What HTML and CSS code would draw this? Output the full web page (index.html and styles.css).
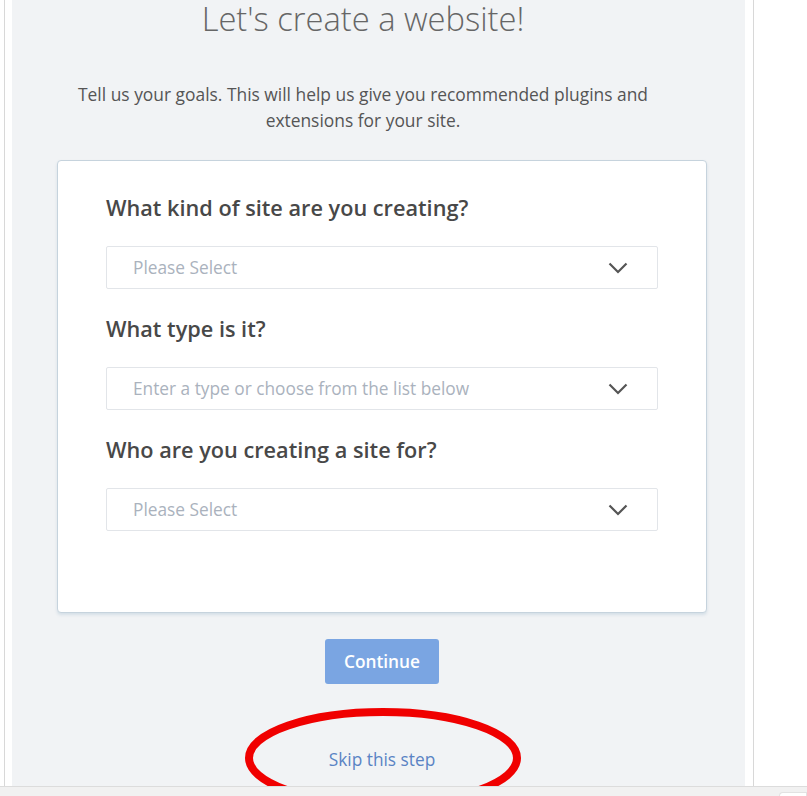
FILE: index.html
```html
<!DOCTYPE html>
<html lang="en">
<head>
    <meta charset="UTF-8">
    <meta name="viewport" content="width=device-width, initial-scale=1">
    <title>Let's create a website!</title>
    <link rel="stylesheet" href="styles.css">
</head>
<body>
    <div class="frame">
        <div class="column">
            <div class="intro">
                <h1>Let's create a website!</h1>
                <p>Tell us your goals. This will help us give you recommended plugins and extensions for your site.</p>
            </div>

            <div class="content">
                <div class="card">
                    <div class="field">
                        <h2>What kind of site are you creating?</h2>
                        <div class="select">
                            <span>Please Select</span>
                            <svg class="chevron" width="20" height="12" viewBox="0 0 20 12"><path d="M1.5 1.5 L10 10 L18.5 1.5" fill="none" stroke="#555" stroke-width="2.2"/></svg>
                        </div>
                    </div>

                    <div class="field">
                        <h2>What type is it?</h2>
                        <div class="select">
                            <span>Enter a type or choose from the list below</span>
                            <svg class="chevron" width="20" height="12" viewBox="0 0 20 12"><path d="M1.5 1.5 L10 10 L18.5 1.5" fill="none" stroke="#555" stroke-width="2.2"/></svg>
                        </div>
                    </div>

                    <div class="field">
                        <h2>Who are you creating a site for?</h2>
                        <div class="select">
                            <span>Please Select</span>
                            <svg class="chevron" width="20" height="12" viewBox="0 0 20 12"><path d="M1.5 1.5 L10 10 L18.5 1.5" fill="none" stroke="#555" stroke-width="2.2"/></svg>
                        </div>
                    </div>
                </div>

                <div class="actions">
                    <button type="button" class="btn-continue">Continue</button>
                </div>

                <div class="skip">
                    <a href="#">Skip this step</a>
                    <!-- Markierung aus dem Screenshot -->
                    <svg class="circle" width="284" height="110" viewBox="0 0 284 110"><ellipse cx="142" cy="55" rx="134" ry="46" fill="none" stroke="#f00000" stroke-width="8"/></svg>
                </div>
            </div>
        </div>
    </div>
    <div class="bottom-bar">
        <div class="tab"></div>
    </div>
</body>
</html>
```

FILE: styles.css
```css
body {
    font-family: 'Open Sans', sans-serif;
    background-color: #fff;
    margin: 0;
    padding: 0;
    overflow: hidden;
}

.frame {
    margin-left: 4px;
    width: 733px;
    height: 786px;
    padding: 0 8px 0 7px;
    border-left: 1px solid #d8d8d8;
    border-right: 1px solid #d8d8d8;
}

.column {
    height: 786px;
    background-color: #f1f3f5;
    overflow: hidden;
}

.intro {
    padding-right: 31px;
    text-align: center;
}

h1 {
    margin: 0;
    padding-top: 1px;
    font-size: 32.7px;
    font-weight: 300;
    line-height: 36px;
    color: #666;
}

.intro p {
    max-width: 640px;
    margin: 44px auto 0;
    font-size: 17.4px;
    line-height: 26px;
    color: #555;
}

.content {
    padding: 0 38px 0 45px;
}

.card {
    margin-top: 27px;
    background-color: #fff;
    border: 1px solid #c6d3dd;
    border-radius: 4px;
    box-shadow: 0 2px 3px rgba(180, 200, 215, 0.45);
    padding: 33px 48px 81px;
}

.field {
    margin-top: 26px;
}

.field:first-child {
    margin-top: 0;
}

h2 {
    margin: 0 0 24px;
    font-size: 21.7px;
    font-weight: 600;
    line-height: 28px;
    color: #484848;
}

.select {
    height: 41px;
    border: 1px solid #e2e5e9;
    border-radius: 2px;
    display: flex;
    align-items: center;
    justify-content: space-between;
    padding: 0 29px 0 26px;
    font-size: 17.3px;
    color: #aab2bd;
}

.chevron {
    display: block;
}

.actions {
    margin-top: 26px;
    text-align: center;
}

.btn-continue {
    width: 114px;
    height: 45px;
    border: none;
    border-radius: 3px;
    background-color: #7aa5e2;
    color: #fff;
    font-family: 'Open Sans', sans-serif;
    font-size: 17.3px;
    font-weight: 600;
    cursor: pointer;
}

.skip {
    position: relative;
    margin-top: 64px;
    text-align: center;
    line-height: 24px;
}

.skip a {
    font-size: 17.3px;
    color: #5a83c4;
    text-decoration: none;
}

.circle {
    position: absolute;
    left: 184px;
    top: -45px;
}

.bottom-bar {
    height: 9px;
    border-top: 1px solid #dcdcdc;
    background-color: #f1f1f1;
    display: flex;
    justify-content: flex-end;
}

.tab {
    width: 26px;
    margin-top: 5px;
    background-color: #fff;
    border: 1px solid #e2e2e2;
    border-bottom: none;
    border-radius: 6px 0 0 0;
}
```
